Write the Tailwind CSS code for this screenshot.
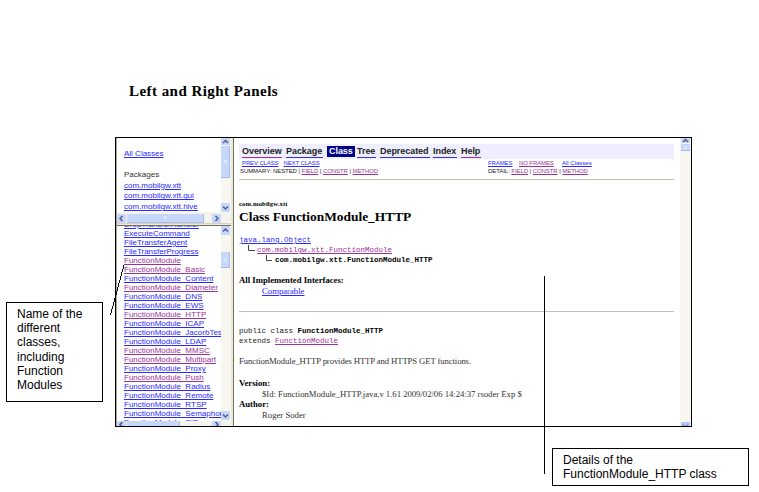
<!DOCTYPE html>
<html lang="en">
<head>
<meta charset="utf-8">
<title>Left and Right Panels</title>
<script src="https://cdn.jsdelivr.net/npm/@tailwindcss/browser@4"></script>
</head>
<body class="relative w-[759px] h-[492px] overflow-hidden bg-white text-black font-['Liberation_Sans',Arial,sans-serif] whitespace-nowrap">
<h1 class="pt-[81px] pl-[129px] h-[137px] font-['Liberation_Serif',serif] font-bold text-[15px] leading-[20px] tracking-[0.45px]">Left and Right Panels</h1>

<main class="ml-[115px] w-[577px] h-[290px] border border-black flex overflow-hidden bg-white">
  <!-- left frames -->
  <div class="w-[115px] h-full flex flex-col text-[8px] border-l border-[#aca899]">
    <section class="h-[85px] flex flex-col overflow-hidden">
      <div class="h-[74px] flex">
        <div class="w-[104px] pl-[7px] pt-[11px] overflow-hidden text-[#2a2aff] leading-[10.75px]">
          <div><a class="underline">All Classes</a></div>
          <div class="pt-[10px] text-[#333]">Packages</div>
          <div><a class="underline">com.mobilgw.xtt</a></div>
          <div><a class="underline">com.mobilgw.xtt.gui</a></div>
          <div><a class="underline">com.mobilgw.xtt.hive</a></div>
        </div>
        <div class="w-[10px] bg-[#f7f6f1] flex flex-col">
          <svg class="w-[9px] h-[7px]" viewBox="0 0 9 7"><rect width="9" height="7" fill="#c7d6fb"/><path d="M2 5l2.500-2.500L7 5" fill="none" stroke="#4d6185" stroke-width="1.500"/></svg>
          <div class="w-[9px] h-[32px] mt-px bg-[#c7d6fb] border-r border-b border-[#a6bcef] flex items-center justify-center"><div class="size-[3px] border-y border-[#e9effd]"></div></div>
          <svg class="w-[9px] h-[9px] mt-auto" viewBox="0 0 9 9"><rect width="9" height="9" rx="1" fill="#c7d6fb"/><path d="M2 3.500l2.500 2.500L7 3.500" fill="none" stroke="#4d6185" stroke-width="1.500"/></svg>
        </div>
      </div>
      <div class="h-[11px] bg-[#f4f3ee] flex items-center pt-px">
        <svg class="w-[9px] h-[9px]" viewBox="0 0 9 9"><rect width="9" height="9" rx="1" fill="#c7d6fb"/><path d="M5.500 2L3 4.500 5.500 7" fill="none" stroke="#4d6185" stroke-width="1.500"/></svg>
        <div class="w-[77px] h-[9px] ml-px bg-[#c7d6fb] border-r border-b border-[#a6bcef] flex items-center justify-center"><div class="size-[3px] border-x border-[#e9effd]"></div></div>
        <svg class="w-[9px] h-[9px] ml-[8px]" viewBox="0 0 9 9"><rect width="9" height="9" rx="1" fill="#c7d6fb"/><path d="M3.500 2L6 4.500 3.500 7" fill="none" stroke="#4d6185" stroke-width="1.500"/></svg>
      </div>
    </section>
    <div class="h-[3px] bg-[#ece9d8] border-b border-[#716f64] border-t border-t-[#d8d4c4]"></div>
    <section class="flex-1 flex flex-col overflow-hidden">
      <div class="h-[195px] flex">
        <div class="w-[104px] pl-[7px] overflow-hidden text-[#2a2aff] leading-[9px]">
          <div class="-mt-[6px]"><a class="underline">DropTransferHandler</a></div>
          <div><a class="underline">ExecuteCommand</a></div>
          <div><a class="underline">FileTransferAgent</a></div>
          <div><a class="underline">FileTransferProgress</a></div>
          <div class="text-[#993399]"><a class="underline">FunctionModule</a></div>
          <div class="text-[#993399]"><a class="underline">FunctionModule_Basic</a></div>
          <div><a class="underline">FunctionModule_Content</a></div>
          <div class="text-[#993399]"><a class="underline">FunctionModule_Diameter</a></div>
          <div><a class="underline">FunctionModule_DNS</a></div>
          <div><a class="underline">FunctionModule_EWS</a></div>
          <div class="text-[#993399]"><a class="underline">FunctionModule_HTTP</a></div>
          <div><a class="underline">FunctionModule_ICAP</a></div>
          <div><a class="underline">FunctionModule_JacorbTest</a></div>
          <div><a class="underline">FunctionModule_LDAP</a></div>
          <div class="text-[#993399]"><a class="underline">FunctionModule_MMSC</a></div>
          <div class="text-[#993399]"><a class="underline">FunctionModule_Multipart</a></div>
          <div><a class="underline">FunctionModule_Proxy</a></div>
          <div class="text-[#993399]"><a class="underline">FunctionModule_Push</a></div>
          <div><a class="underline">FunctionModule_Radius</a></div>
          <div><a class="underline">FunctionModule_Remote</a></div>
          <div><a class="underline">FunctionModule_RTSP</a></div>
          <div><a class="underline">FunctionModule_Semaphore</a></div>
          <div><a class="underline">FunctionModule_SIP</a></div>
        </div>
        <div class="w-[10px] bg-[#f7f6f1] flex flex-col">
          <svg class="w-[9px] h-[9px]" viewBox="0 0 9 9"><rect width="9" height="9" rx="1" fill="#c7d6fb"/><path d="M2 5.500L4.500 3 7 5.500" fill="none" stroke="#4d6185" stroke-width="1.500"/></svg>
          <div class="w-[9px] h-[16px] mt-[17px] bg-[#c7d6fb] border-r border-b border-[#a6bcef] flex items-center justify-center"><div class="size-[3px] border-y border-[#e9effd]"></div></div>
          <svg class="w-[9px] h-[9px] mt-auto mb-[1px]" viewBox="0 0 9 9"><rect width="9" height="9" rx="1" fill="#c7d6fb"/><path d="M2 3.500l2.500 2.500L7 3.500" fill="none" stroke="#4d6185" stroke-width="1.500"/></svg>
        </div>
      </div>
      <div class="h-[5px] bg-[#f4f3ee] flex">
        <svg class="w-[9px] h-[5px]" viewBox="0 0 9 5"><rect width="9" height="5" fill="#c7d6fb"/><path d="M5.500 1L3 3.500 5 5.500" fill="none" stroke="#4d6185" stroke-width="1.500"/></svg>
        <div class="w-[53px] h-[5px] ml-px bg-[#c7d6fb] border-r border-[#a6bcef]"></div>
        <svg class="w-[9px] h-[5px] ml-[32px]" viewBox="0 0 9 5"><rect width="9" height="5" fill="#c7d6fb"/><path d="M3.500 1L6 3.500 4 5.500" fill="none" stroke="#4d6185" stroke-width="1.500"/></svg>
      </div>
    </section>
  </div>
  <div class="w-[3px] h-full bg-[#ece9d8] border-r border-[#716f64]"></div>

  <!-- class documentation -->
  <article class="w-[446px] h-full pl-[5px] pt-[6px] font-['Liberation_Serif',serif] text-[8.7px]">
    <nav class="w-[435px] h-[15px] bg-[#eeeeff] flex items-center pl-[3px] font-['Liberation_Sans',Arial,sans-serif] font-bold text-[9px] leading-[11px] tracking-[-0.05px] text-[#222]">
      <a class="w-[40px] border-b border-[#993399]">Overview</a>
      <a class="w-[37px] ml-[4px] border-b border-[#3333ee]">Package</a>
      <span class="w-[28px] ml-[4px] pl-[2px] bg-[#00008b] text-white">Class</span>
      <a class="w-[19px] ml-[2px] border-b border-[#3333ee]">Tree</a>
      <a class="w-[50px] ml-[4px] border-b border-[#3333ee]">Deprecated</a>
      <a class="w-[24px] ml-[3px] border-b border-[#3333ee]">Index</a>
      <a class="w-[20px] ml-[4px] border-b border-[#993399]">Help</a>
    </nav>
    <div class="w-[435px] flex font-['Liberation_Sans',Arial,sans-serif] text-[6px] leading-[8px]">
      <div class="w-[249px] pl-px">
        <div class="pl-[2px] flex gap-[5px] text-[#2a2aff]"><a class="underline tracking-[-0.12px]">PREV CLASS</a><a class="underline tracking-[-0.12px]">NEXT CLASS</a></div>
        <div class="text-[#222] tracking-[-0.07px]">SUMMARY: NESTED | <a class="underline text-[#993399]">FIELD</a> | <a class="underline text-[#993399]">CONSTR</a> | <a class="underline text-[#993399]">METHOD</a></div>
      </div>
      <div>
        <div class="flex text-[#2a2aff]"><a class="underline w-[31px] tracking-[-0.1px]">FRAMES</a><a class="underline w-[43px] tracking-[-0.1px] text-[#993399]">NO FRAMES</a><a class="underline">All Classes</a></div>
        <div class="text-[#222] tracking-[-0.07px]">DETAIL: <a class="underline text-[#993399]">FIELD</a> | <a class="underline text-[#993399]">CONSTR</a> | <a class="underline text-[#993399]">METHOD</a></div>
      </div>
    </div>
    <hr class="mt-[4px] w-[435px] border-t border-[#c3c0b4]">
    <div class="mt-[20px] text-[6.700px] leading-[8px] font-bold tracking-[0.1px]">com.mobilgw.xtt</div>
    <h2 class="text-[13.400px] leading-[16px] mt-px font-bold">Class FunctionModule_HTTP</h2>
    <div class="mt-[10px] font-['Liberation_Mono',monospace] text-[7.500px] leading-[10px]">
      <div><a class="underline text-[#2a2aff]">java.lang.Object</a></div>
      <div class="flex pl-[9px]"><svg class="w-[9px] h-[10px]" viewBox="0 0 9 10"><path d="M.5 0v5.500H7" fill="none" stroke="#444"/></svg><a class="underline text-[#993399]">com.mobilgw.xtt.FunctionModule</a></div>
      <div class="flex pl-[27px]"><svg class="w-[9px] h-[10px]" viewBox="0 0 9 10"><path d="M.5 0v5.500H6" fill="none" stroke="#444"/></svg><b>com.mobilgw.xtt.FunctionModule_HTTP</b></div>
    </div>
    <div class="mt-[10px] leading-[11px]"><b>All Implemented Interfaces:</b></div>
    <div class="pl-[23px] leading-[11px]"><a class="underline text-[#2a2aff]">Comparable</a></div>
    <hr class="mt-[14px] w-[435px] border-t border-[#c3c0b4]">
    <div class="mt-[15px] font-['Liberation_Mono',monospace] text-[7.500px] leading-[9.500px] text-[#222]">
      <div>public class <b class="text-black">FunctionModule_HTTP</b></div>
      <div>extends <a class="underline text-[#993399]">FunctionModule</a></div>
    </div>
    <p class="mt-[10px] leading-[11px] tracking-[-0.11px] text-[#333]">FunctionModule_HTTP provides HTTP and HTTPS GET functions.</p>
    <dl class="mt-[11px] leading-[10.700px] text-[#333]">
      <dt class="font-bold text-black">Version:</dt>
      <dd class="pl-[23px] tracking-[-0.02px]">$Id: FunctionModule_HTTP.java,v 1.61 2009/02/06 14:24:37 rsoder Exp $</dd>
      <dt class="font-bold text-black">Author:</dt>
      <dd class="pl-[23px]">Roger Soder</dd>
    </dl>
  </article>
  <div class="flex-1 bg-[#f7f6f1] flex flex-col pl-px">
    <svg class="w-[9px] h-[5px]" viewBox="0 0 9 5"><rect width="9" height="5" fill="#c7d6fb"/><path d="M2 4l2.500-2.500L7 4" fill="none" stroke="#4d6185" stroke-width="1.500"/></svg>
    <div class="w-[9px] h-[7px] mt-px bg-[#c7d6fb] border-b border-[#a6bcef] flex items-center justify-center"><div class="size-[3px] border-y border-[#e9effd]"></div></div>
    <svg class="w-[9px] h-[4px] mt-auto" viewBox="0 0 9 4"><rect width="9" height="4" rx="1" fill="#b4c8f8"/><path d="M2 2.500l2 2M7 2.500l-2 2" fill="none" stroke="#4d6185"/></svg>
  </div>
</main>

<!-- callouts -->
<svg class="absolute inset-0 pointer-events-none" width="759" height="492" viewBox="0 0 759 492" fill="none" stroke="#000" shape-rendering="crispEdges"><path d="M110.500 315L124 265M544.500 276V474"/></svg>
<aside class="absolute left-[6px] top-[302px] w-[97px] h-[100px] border border-black bg-white pl-[10px] pt-[4px] text-[12px] leading-[14.200px]">Name of the<br>different<br>classes,<br>including<br>Function<br>Modules</aside>
<aside class="absolute left-[552px] top-[448px] w-[197px] h-[38px] border border-black bg-white pl-[10px] pt-[4px] text-[12px] leading-[14px]">Details of the<br>FunctionModule_HTTP class</aside>
</body>
</html>
